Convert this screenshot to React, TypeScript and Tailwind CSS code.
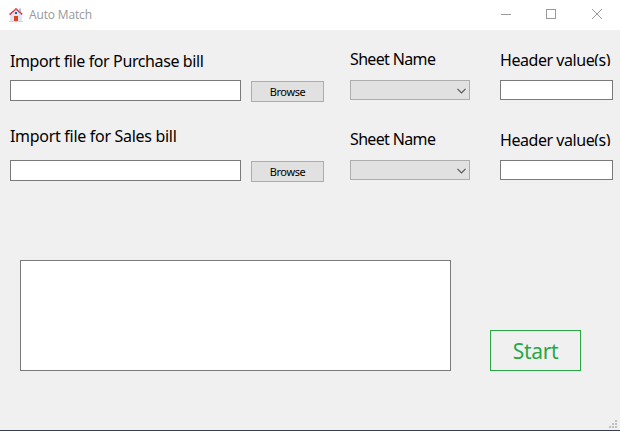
const label = "whitespace-nowrap text-[16px] leading-[22px] text-black";

function HouseIcon() {
  return (
    <svg width="14" height="14" viewBox="0 0 14 14" className="mb-px block">
      <path d="M1.2 7 7 1.5 12.8 7v6H1.2z" fill="#dfe3f3" />
      <path d="M10 .5h2v4l-2-2z" fill="#b9c0dc" />
      <path d="M.6 6.6 7 .9l6.4 5.7" fill="none" stroke="#d0222e" strokeWidth="1.5" strokeDasharray="1.6 .3" />
      <rect x="6" y="4" width="2" height="2" fill="#1467a8" />
      <rect x="5" y="8" width="4" height="5" fill="#d9481c" />
      <path d="M0 13.5h14" stroke="#cfd4e8" />
    </svg>
  );
}

function TitleBar() {
  return (
    <header className="flex h-[30px] shrink-0 items-center bg-white pl-[9px]">
      <HouseIcon />
      <h1 className="ml-1.5 grow whitespace-nowrap font-['Open_Sans',sans-serif] text-[12px] leading-4 tracking-[-0.15px] text-[#999]">Auto Match</h1>
      <svg width="119" height="30" viewBox="0 0 119 30" fill="none" stroke="#999" shapeRendering="crispEdges">
        <path d="M0 14.5h10" />
        <rect x="45.5" y="9.5" width="9" height="9" />
        <path d="m91 9 10 10m0-10-10 10" shapeRendering="auto" />
      </svg>
    </header>
  );
}

function ImportRow({ title, first }: { title: string; first: boolean }) {
  return (
    <section className="flex h-20 items-start pl-2.5">
      <div className="w-[231px]">
        <div className={`flex h-[50px] ${first ? "pt-[20px]" : "pt-[15px]"}`}>
          <label className={`${label} ${first ? "tracking-[-0.39px]" : "tracking-[-0.3px]"}`}>{title}</label>
        </div>
        <input className="block h-[21px] w-full border border-[#7a7a7a] bg-white" />
      </div>
      <button className="ml-2.5 mt-[51px] h-[21px] w-[73px] border border-[#adadad] bg-[#e1e1e1] text-[11px] leading-[18px] tracking-[-0.4px] text-black">Browse</button>
      <div className="ml-[26px] w-[120px]">
        <div className="flex h-[50px] pt-[18px]">
          <label className={`${label} tracking-[-0.65px]`}>Sheet Name</label>
        </div>
        <div className="flex h-5 items-center justify-end border border-[#adadad] bg-[#e1e1e1] pr-[3px] pt-px">
          <svg width="9" height="6" viewBox="0 0 9 6" fill="none" stroke="#555" strokeWidth="1.2">
            <path d="m.5 .8 4 4 4-4" />
          </svg>
        </div>
      </div>
      <div className="ml-[30px] w-[113px]">
        <div className="h-[36px] overflow-hidden pt-[19px]">
          <label className={`${label} block tracking-[-0.45px]`}>Header value(s)</label>
        </div>
        <input className="mt-[14px] block h-5 w-full border border-[#7a7a7a] bg-white" />
      </div>
    </section>
  );
}

export default function App() {
  return (
    <div className="flex h-[431px] w-[620px] flex-col overflow-hidden border-b border-[#343c50] bg-[#f0f0f0] font-['Noto_Sans',sans-serif]">
      <TitleBar />
      <main className="flex grow flex-col">
        <ImportRow title="Import file for Purchase bill" first />
        <ImportRow title="Import file for Sales bill" first={false} />
        <div className="mt-[70px] flex items-end pl-5">
          <textarea className="block h-[111px] w-[431px] resize-none border border-[#7a7a7a] bg-white" />
          <button className="ml-[39px] h-[41px] w-[91px] border border-[#28a745] pt-0.5 text-[21px] tracking-[-0.3px] text-[#28a745]">Start</button>
        </div>
        <svg width="8" height="8" viewBox="0 0 8 8" fill="#bfbfbf" className="mb-[2px] ml-auto mr-[3px] mt-auto block" shapeRendering="crispEdges">
          <path d="M6 0h2v2H6zM3 3h2v2H3zM6 3h2v2H6zM0 6h2v2H0zM3 6h2v2H3zM6 6h2v2H6z" />
        </svg>
      </main>
    </div>
  );
}
